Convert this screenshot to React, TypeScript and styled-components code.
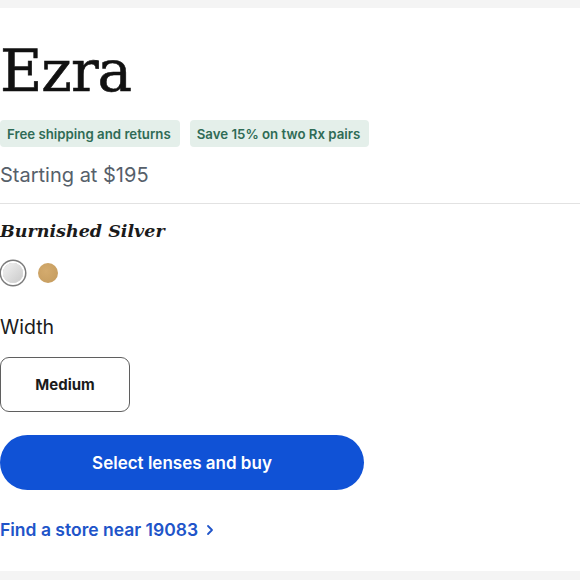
import React from "react";
import styled, { createGlobalStyle } from "styled-components";

const Global = createGlobalStyle`
  html, body { margin: 0; padding: 0; background: #f4f4f4; }
  body { font-family: Inter, "Liberation Sans", sans-serif; }
`;

const Page = styled.div`
  width: 580px;
  height: 580px;
  box-sizing: border-box;
  padding: 8px 0 9px;
  background: #f4f4f4;
  overflow: hidden;
`;

const Panel = styled.main`
  height: 100%;
  background: #ffffff;
  display: flex;
  flex-direction: column;
`;

const Title = styled.h1`
  margin: 0;
  padding-top: 25px;
  font-family: "DejaVu Serif", "Liberation Serif", serif;
  font-weight: 400;
  font-size: 58px;
  line-height: 76px;
  letter-spacing: -1px;
  color: #111111;
  -webkit-text-stroke: 0.6px #111111;
`;

const Badges = styled.div`
  display: flex;
  gap: 10px;
  margin-top: 11px;
`;

const Badge = styled.span`
  display: inline-flex;
  align-items: center;
  height: 27px;
  padding: 0 9px 0 7px;
  border-radius: 4px;
  background: #e4efea;
  color: #2f6b55;
  font-size: 13.25px;
  font-weight: 600;
`;

const Price = styled.div`
  margin-top: 15px;
  font-size: 20px;
  line-height: 26px;
  color: #56606a;
`;

const Divider = styled.hr`
  margin: 15px 0 0;
  border: 0;
  border-top: 1px solid #e2e2e2;
`;

const ColorName = styled.div`
  margin-top: 14px;
  font-family: "DejaVu Serif", "Liberation Serif", serif;
  font-style: italic;
  font-weight: 700;
  font-size: 17.5px;
  line-height: 26px;
  color: #1b1b1b;
`;

const Swatches = styled.div`
  display: flex;
  align-items: center;
  gap: 15px;
  margin-top: 19px;
`;

const Swatch = styled.span<{ $color: string; $selected?: boolean }>`
  display: inline-block;
  width: 20px;
  height: 20px;
  border-radius: 50%;
  background: ${(p) => p.$color};
  box-shadow: ${(p) =>
    p.$selected ? "0 0 0 2px #ffffff, 0 0 0 3.5px #7a7a7a" : "none"};
  margin-left: ${(p) => (p.$selected ? "3px" : "0")};
`;

const Label = styled.div`
  margin-top: 32px;
  font-size: 19.5px;
  line-height: 24px;
  color: #1b1b1b;
`;

const SizeButton = styled.button`
  margin-top: 18px;
  width: 130px;
  height: 55px;
  box-sizing: border-box;
  border: 1.5px solid #5f5f5f;
  border-radius: 9px;
  background: #fff;
  font-family: Inter, "Liberation Sans", sans-serif;
  font-size: 15px;
  font-weight: 700;
  color: #1b1b1b;
  align-self: flex-start;
`;

const BuyButton = styled.button`
  margin-top: 23px;
  width: 364px;
  height: 55px;
  border: 0;
  border-radius: 28px;
  background: #1052d6;
  color: #ffffff;
  font-family: Inter, "Liberation Sans", sans-serif;
  font-size: 17px;
  font-weight: 600;
  align-self: flex-start;
`;

const StoreLink = styled.a`
  margin-top: 29px;
  display: inline-flex;
  align-items: center;
  gap: 8px;
  font-size: 17.5px;
  font-weight: 600;
  color: #2054c9;
  text-decoration: none;
`;

export default function App() {
  return (
    <>
      <Global />
      <Page>
        <Panel>
          <Title>Ezra</Title>
          <Badges>
            <Badge>Free shipping and returns</Badge>
            <Badge>Save 15% on two Rx pairs</Badge>
          </Badges>
          <Price>Starting at $195</Price>
          <Divider />
          <ColorName>Burnished Silver</ColorName>
          <Swatches>
            <Swatch $color="linear-gradient(135deg, #f2f2f2, #c9c9c9)" $selected />
            <Swatch $color="radial-gradient(circle at 40% 40%, #d4ab6e, #c39a5c)" />
          </Swatches>
          <Label>Width</Label>
          <SizeButton>Medium</SizeButton>
          <BuyButton>Select lenses and buy</BuyButton>
          <StoreLink href="#">
            Find a store near 19083
            <svg width="8" height="12" viewBox="0 0 8 12" fill="none">
              <path d="M2 2l4 4-4 4" stroke="#2054c9" strokeWidth="1.8" strokeLinecap="round" strokeLinejoin="round" />
            </svg>
          </StoreLink>
        </Panel>
      </Page>
    </>
  );
}
